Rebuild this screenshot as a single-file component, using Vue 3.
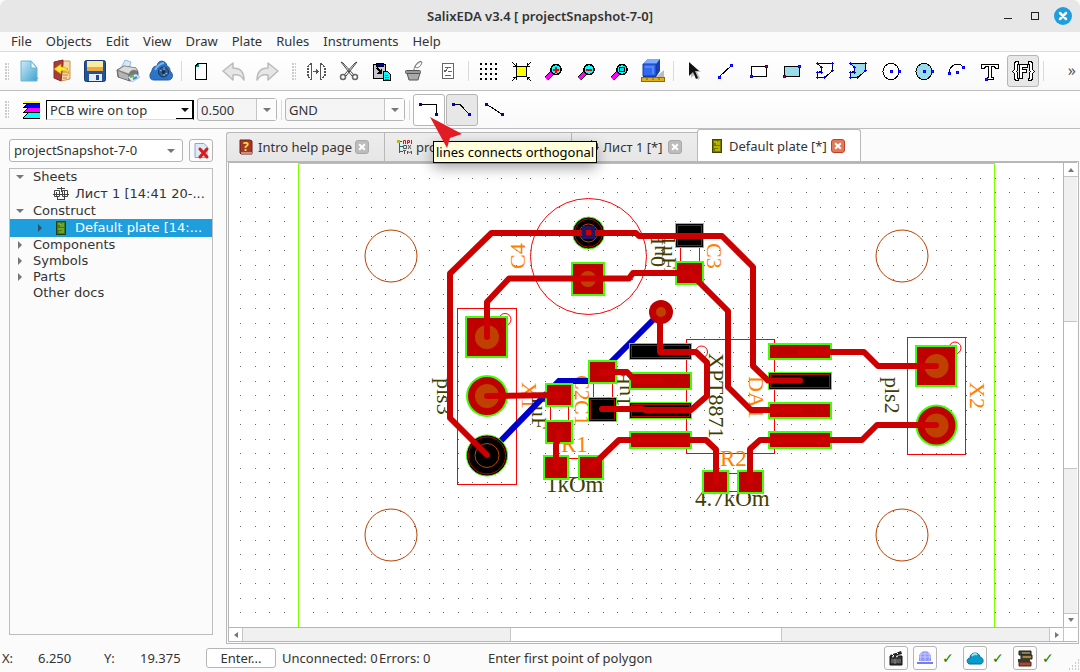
<script setup>
const menus = ['File', 'Objects', 'Edit', 'View', 'Draw', 'Plate', 'Rules', 'Instruments', 'Help']

const lens = '<path d="M4 20L10 14" stroke="#000" stroke-width="5"/><path d="M4 20L10 14" stroke="#f0f" stroke-width="3"/><circle cx="14" cy="10.500" r="5" fill="#0ff" stroke="#000" stroke-width="1.500"/>'
const dot = (x, y) => `<rect x="${x - 1.5}" y="${y - 1.5}" width="3" height="3" fill="#00f"/><rect x="${x - 0.5}" y="${y - 0.5}" width="1" height="1" fill="#c00060"/>`
const node = (x, y) => `<rect x="${x - 1.5}" y="${y - 1.5}" width="3" height="3" fill="#00c"/>`
const poly = (fill) => `<path d="M4.500 4.500H19.500V11.500L12 18.500H4.500V13.500L8.500 12.500V8.500Z" fill="${fill}" stroke="#000" stroke-width="1"/>` + [[4.5, 4.5], [19.5, 4.5], [19.5, 11.5], [11.5, 18.5], [4.5, 18.5], [4.5, 13.5], [8.5, 13.5], [8.5, 8.5]].map(([x, y]) => `<path d="M${x - 1.5} ${y}h3M${x} ${y - 1.5}v3" stroke="#00f"/>`).join('')
const gridDots = [4, 9, 14, 19].map((y) => [4, 9, 14, 19].map((x) => `<rect x="${x}" y="${y}" width="2" height="2"/>`).join('')).join('')

const icons = {
  new: '<defs><linearGradient id="gn" x2="1" y2="1"><stop offset="0" stop-color="#cfeaf6"/><stop offset="1" stop-color="#3ba3d0"/></linearGradient></defs><path d="M5 21l17-1-3-4z" fill="#bbb"/><path d="M4 2h10l6 7v13H4z" fill="url(#gn)" stroke="#6bb4d4"/><path d="M14 2v7h6z" fill="#e8f7fc" stroke="#6bb4d4"/>',
  open: '<path d="M8 2h12v18l-9 2z" fill="#f3d9a5" stroke="#c9935a"/><path d="M13 10h5M13 13h5M13 16h5M13 19h4" stroke="#d4763c"/><path d="M4 3l9-2v4L11 22l-7-3z" fill="#a83c3c" stroke="#8b2b2b"/><path d="M4 10l7-5v3c5 0 7 2 8 7-2-3-4-4-8-3v3z" fill="#ffe92e" stroke="#c8960a" stroke-width=".6"/>',
  save: '<rect x="1.500" y="1.500" width="21" height="21" rx="2" fill="#23539b" stroke="#173a72"/><rect x="4" y="2" width="16" height="10" fill="#ffe9a0"/><path d="M4 9h16M4 11h16" stroke="#eba93a" stroke-width="2"/><rect x="6" y="15" width="13" height="7" fill="#e6eef5"/><rect x="13" y="16" width="3" height="5" fill="#214c8c"/>',
  print: '<path d="M5 9l4-8 6 2-2 7z" fill="#d5e8f8" stroke="#9cbbd6"/><path d="M1 11l7-4 12 2 2 4v6l-8 3-12-4z" fill="#777" stroke="#666"/><path d="M2 11l6-4 12 2c1 1 1 2 1 3-3-2-7-1-8 3z" fill="#dcdcdc" stroke="#888" stroke-width=".6"/><path d="M2 12l10 4v5l-9-3z" fill="#b5b5b5"/><path d="M12 18l8-3 4 3-8 5z" fill="#dff1ff" stroke="#88a9cc" stroke-width=".6"/><path d="M14 18l4-1" stroke="#5fba37" stroke-width="2"/><path d="M17 20l4-2" stroke="#48c" stroke-width="2"/>',
  cloud: '<path d="M5 21c-5 0-5-6-2-9C3 8 6 7 8 7c1-7 9-6 10 0 3 1 3 4 3 5 4 3 3 9-2 9z" fill="#2b74c8" stroke="#245ca4"/><path d="M6 11c2-4 6-7 9-7" stroke="#79b3ee" stroke-width="2" fill="none"/><circle cx="14.500" cy="13" r="5" fill="#335d91" stroke="#18365e"/><path d="M15 8v9M10.500 11l8 4" stroke="#89b5e0"/><circle cx="14.500" cy="13" r="2" fill="#172d4a"/>',
  page: '<path d="M9.500 4.500h8v16h-11v-13z" fill="#fff" stroke="#000" stroke-width="1.500"/><path d="M6 8h4V4z" fill="#087"/>',
  undo: '<path d="M1 12L11 4v5c7 0 11 4 11 12-3-5-6-6-11-5v5z" fill="#e6e6e6" stroke="#bbb" stroke-width="1.500" stroke-linejoin="round"/>',
  redo: '<path d="M23 12L13 4v5C6 9 2 13 2 21c3-5 6-6 11-5v5z" fill="#e6e6e6" stroke="#bbb" stroke-width="1.500" stroke-linejoin="round"/>',
  mirror: '<path d="M7.500 4v17M16.500 4v17M9 12.500h6M12.500 10v5M13.500 11v3" fill="none" stroke="#555"/><path d="M7 4.500L3.500 8v9L7 20.500M17 4.500L20.500 8v9L17 20.500" fill="none" stroke="#555" stroke-width="2" stroke-dasharray="2 1"/>',
  cut: '<path d="M4 3l2 1 11 12-2 1zM20 3l-2 1L7 16l2 1z" fill="#fff" stroke="#444"/><circle cx="6" cy="18" r="2.500" fill="none" stroke="#666" stroke-width="1.500"/><circle cx="18" cy="18" r="2.500" fill="none" stroke="#666" stroke-width="1.500"/>',
  paste: '<rect x="3.500" y="5.500" width="12" height="14" fill="#c8c8cc" stroke="#000" stroke-width="1.500"/><rect x="6" y="4" width="7" height="3" fill="#00a" stroke="#000"/><path d="M7 9l4 4" stroke="#000" stroke-width="2"/><path d="M12 9v6H6z"/><path d="M13.500 12.500h4l3 3v6h-7z" fill="#0ff" stroke="#000"/><path d="M15 16h3M15 18h4M15 20h4" stroke="#06c"/>',
  bucket: '<path d="M4 14h13l-2 7H6z" fill="#aaa" stroke="#555"/><rect x="2.500" y="11.500" width="15" height="3" rx="1" fill="#999" stroke="#555"/><path d="M11 11c0-4 3-6 7-9M12 8c2 2 6 0 7-5-3-1-6 1-7 5" fill="none" stroke="#777"/>',
  list: '<rect x="6.500" y="4.500" width="11" height="15" fill="#fff" stroke="#666" stroke-width="1.500"/><path d="M9 8.500h6M12 12.500h4M9 16.500h6M8 11l1 2 3-4" fill="none" stroke="#666"/>',
  grid: gridDots,
  fit: '<rect x="7.500" y="7.500" width="10" height="10" fill="#ff0" stroke="#000"/><path d="M3 3l4 4M22 3l-4 4M3 22l4-4M22 22l-4-4M7 4v3H4M18 4v3h3M7 21v-3H4M18 21v-3h3" fill="none" stroke="#000"/>',
  plus: lens + '<path d="M11 10.500h6M14 7.500v6" stroke="#e00" stroke-width="2"/>',
  minus: lens + '<path d="M11 10.500h6" stroke="#e00" stroke-width="2"/>',
  zoombox: lens + '<rect x="11.500" y="8.500" width="5" height="4" fill="#0dd" stroke="#000"/>',
  cube: '<path d="M15 18l8-7v7z" fill="#bbb"/><path d="M2 5l5-5h12v12l-4 6H2z" fill="#173fae"/><path d="M2 5l5-5h12l-4 5z" fill="#80adff"/><path d="M2 5h13v12H2z" fill="#316af0" stroke="#153ba7"/><path d="M4 8h8v7" fill="none" stroke="#5487f8" stroke-width="2"/><rect x=".500" y="18.500" width="23" height="4" fill="#e1ad18" stroke="#946a00"/><path d="M6 19v2M12 19v2M18 19v2" stroke="#865f00"/>',
  cursor: '<path d="M10 5v14l4-4 3 6 2-2-3-6h4z" fill="#bbb"/><path d="M8 3v14l4-4 3 7 2-1-3-7h4z" fill="#111"/>',
  line: '<path d="M5 18L18 6" stroke="#000"/>' + dot(5.5, 18.5) + dot(17.5, 6.5),
  rect: '<rect x="4.500" y="7.500" width="15" height="10" fill="#fff" stroke="#000"/>' + dot(4.5, 17.5) + dot(19.5, 7.5),
  rectfill: '<rect x="4.500" y="7.500" width="15" height="10" fill="#9bdcea" stroke="#000"/>' + dot(4.5, 17.5) + dot(19.5, 7.5),
  poly: poly('#fff'),
  polyfill: poly('#9bdcea'),
  circle: '<circle cx="12" cy="12.500" r="8" fill="#fff" stroke="#000"/>' + dot(12.5, 12.5) + dot(20.5, 12.5),
  circlefill: '<circle cx="12" cy="12.500" r="8" fill="#9bdcea" stroke="#000"/>' + dot(12.5, 12.5) + dot(20.5, 12.5),
  arc: '<path d="M4.500 14C4 6 14 2 18.500 8.500" fill="none" stroke="#000"/>' + dot(4.5, 14.5) + dot(18.5, 8.5) + dot(12.5, 13.5),
  text: '<path d="M3.500 5.500h17v4h-3l-1-2h-3v11h2v2h-6l0-2h1v-11h-3l-1 2h-3z" fill="#fff" stroke="#000"/>' + dot(8.5, 20.5),
  func: '<path d="M7.500 2.500h-3l-1 2v6l-2 2 2 2v5l1 2h3v-2h-1v-6l-1-1 1-1v-6h1zM17.500 2.500h3l1 2v6l2 2-2 2v5l-1 2h-3v-2h1v-6l1-1-1-1v-6h-1z" fill="#fff" stroke="#000"/><path d="M8.500 5.500h8v3h-5v2h4v3h-4v6h-3z" fill="#fff" stroke="#000"/>',
  ortho: '<path d="M4 6.500h15.500V17" fill="none" stroke="#000"/>' + node(3.5, 6.5) + node(19.5, 16.5),
  bevel: '<path d="M4 6.500h6L19.500 16.500" fill="none" stroke="#000"/>' + node(3.5, 6.5) + node(19.5, 16.5),
  free: '<path d="M4 6.500L19.500 16.500" fill="none" stroke="#000"/>' + node(3.5, 6.5) + node(19.5, 16.5)
}

const soft = ['new', 'open', 'save', 'print', 'cloud', 'undo', 'redo', 'cursor', 'cube', 'cut', 'bucket']
const groups = [
  [['new', 'open', 'save', 'print', 'cloud'], ['page', 'undo', 'redo']],
  [['mirror', 'cut', 'paste', 'bucket', 'list'], ['grid', 'fit', 'plus', 'minus', 'zoombox', 'cube'],
    ['cursor', 'line', 'rect', 'rectfill', 'poly', 'polyfill', 'circle', 'circlefill', 'arc', 'text', 'func']]
]

const modes = [{ id: 'ortho', state: 'hover' }, { id: 'bevel', state: 'on' }, { id: 'free', state: '' }]

const tree = [
  { t: 'Sheets', a: 'open' },
  { t: 'Лист 1 [14:41 20-...', icon: 'sheet' },
  { t: 'Construct', a: 'open' },
  { t: 'Default plate [14:...', icon: 'plate', a: 'closed', sel: true },
  { t: 'Components', a: 'closed' },
  { t: 'Symbols', a: 'closed' },
  { t: 'Parts', a: 'closed' },
  { t: 'Other docs' }
]

let gridPath = ''
for (let j = 0; j < 31; j++) {
  for (let i = 0; i < 57; i++) {
    gridPath += `M${Math.round(240 + i * 14.51)} ${Math.round(178 + j * 14.48)}h1v1h-1z`
  }
}

const holes = [[391, 256], [902, 256], [391, 535], [902, 535]]
const outlines = [
  [457.5, 308.5, 59, 176], [686.5, 339.5, 88, 114], [907.5, 337.5, 58, 117],
  [680.5, 240.5, 19, 28], [550.5, 395.5, 18, 36], [593.5, 372.5, 19, 36],
  [556.5, 458.5, 35, 19], [715.5, 473.5, 35, 18]
]
const marks = [[505, 319.5], [701.5, 352], [955, 348]]
const pads = [
  [571, 262, 34, 34], [675, 261, 29, 24], [465, 316, 43, 42], [545, 383, 28, 24], [545, 420, 28, 24],
  [588, 360, 29, 24], [543, 455, 26, 25], [578, 455, 26, 25], [629, 372, 63, 18], [629, 431, 63, 18],
  [768, 343, 64, 17], [768, 402, 64, 17], [768, 431, 64, 18], [702, 470, 27, 24], [737, 470, 27, 24],
  [915, 345, 42, 42]
]
const darkPads = [[675, 223, 29, 25], [588, 397, 29, 25], [629, 343, 63, 17], [629, 402, 63, 17], [768, 372, 64, 18]]
const drills = [[588, 279, 8], [487, 337, 12], [487, 396, 12], [936.5, 366, 12], [936.5, 425.5, 12]]
const traces = [
  'M487 455L450 418V273.500L491.500 233H636L639 236H722L753 267V366L768 380.500H800',
  'M487 337V302L509 278.500H629L633 273H690L728 311V387L751 410H800',
  'M487 396L560 395', 'M559 432V438L556 444V467',
  'M591 467L619 440H706L716 449.500V482',
  'M602 372H627L635 380.500H660',
  'M602 409H642L645 410H691L707 396V362.500L696 352H660V312',
  'M800 352H864L878 366H936', 'M750 482V449L760 440H862L877 425H936'
]
const labels = [
  ['C4', 525, 269, -90, 'r'], ['C3', 707, 243, 90, 'r'], ['X1', 522, 382, 90, 'r'], ['X2', 970, 382, 90, 'r'],
  ['DA1', 749, 376, 90, 'r'], ['C2', 575, 375, 90, 'r'], ['C1', 575, 400, 90, 'r'],
  ['R1', 561, 452, 0, 'r'], ['R2', 720, 466, 0, 'r'],
  ['1kOm', 546, 492, 0, 'v'], ['4.7kOm', 695, 506, 0, 'v'],
  ['pls3', 437, 378, 90, 'v'], ['pls2', 885, 377, 90, 'v'], ['XPT8871', 709, 353, 90, 'v'],
  ['1uF', 532, 395, 90, 'v'], ['1uF', 630, 407, -90, 'v'], ['10uF', 665, 278, -90, 'v'], ['1uF', 662, 235, 90, 'v']
]
</script>

<template>
  <div class="app">
    <header class="title">
      <h1>SalixEDA v3.4 [ projectSnapshot-7-0]</h1>
      <div class="winbtns">
        <button aria-label="Minimize"><svg width="16" height="16"><path d="M4 10.500h8" stroke="#222" /></svg></button>
        <button aria-label="Maximize"><svg width="16" height="16"><rect x="4.500" y="4.500" width="7" height="7" fill="none" stroke="#222" /></svg></button>
        <button aria-label="Close"><svg width="18" height="18"><circle cx="9" cy="9" r="9" fill="#1f9ede" /><path d="M6 6l6 6M12 6l-6 6" stroke="#fff" stroke-width="2.500" stroke-linecap="round" /></svg></button>
      </div>
    </header>

    <nav class="menu">
      <button v-for="m in menus" :key="m">{{ m }}</button>
    </nav>

    <div class="bar">
      <template v-for="(bar, b) in groups" :key="b">
        <span class="grip" :class="{ second: b }"></span>
        <template v-for="(g, k) in bar" :key="k">
          <span v-if="k" class="sep"></span>
          <button v-for="id in g" :key="id" class="tool" :class="{ on: id === 'func' }" :aria-label="id">
            <svg width="24" height="24" viewBox="0 0 24 24" :class="{ crisp: !soft.includes(id) }" v-html="icons[id]"></svg>
          </button>
        </template>
      </template>
      <span class="sep"></span>
      <button class="more" aria-label="More tools">»</button>
    </div>

    <div class="bar second-bar">
      <span class="grip"></span>
      <svg class="layers" width="20" height="20" viewBox="0 0 20 20">
        <path d="M4 1h15v2H2z" fill="#ff0" /><path d="M6 3h13v5H2z" fill="#00f" /><path d="M6 8h13v5H2z" fill="#f0f" /><path d="M6 13h13v5H2z" fill="#0ff" />
        <path d="M2 3.500h17M2 7.500h17M2 12.500h17M2 18.500h17M7 4L2 8M7 8L2 13M7 13L2 18" fill="none" stroke="#000" />
      </svg>
      <div class="pick layer"><select aria-label="Layer"><option>PCB wire on top</option></select><i></i></div>
      <div class="combo width"><input aria-label="Width" value="0.500"><button aria-label="Width list"><i></i></button></div>
      <span class="sep"></span>
      <div class="combo net"><input aria-label="Net" value="GND"><button aria-label="Net list"><i></i></button></div>
      <span class="sep"></span>
      <button v-for="m in modes" :key="m.id" class="tool" :class="m.state" :aria-label="m.id">
        <svg class="crisp" width="24" height="24" viewBox="0 0 24 24" v-html="icons[m.id]"></svg>
      </button>
      <div class="tip" role="tooltip">lines connects orthogonal</div>
      <svg class="pointer" width="34" height="32"><path d="M0 0L32 17L20 21L17 31Z" fill="#e21b24" /></svg>
    </div>

    <main class="body">
      <aside class="side">
        <div class="siderow">
          <div class="pick proj"><select aria-label="Project"><option>projectSnapshot-7-0</option></select><i></i></div>
          <button class="del" aria-label="Close project">
            <svg width="18" height="18"><path d="M3 1.500h9l3 3v11H3z" fill="#dfe9f8" stroke="#8aa6cc" /><path d="M8 7l7 8M15 7l-7 8" stroke="#d91c1c" stroke-width="3" stroke-linecap="round" /></svg>
          </button>
        </div>
        <ul class="tree">
          <li v-for="n in tree" :key="n.t" :class="{ child: n.icon, sel: n.sel }">
            <span class="tw"><svg v-if="n.a" width="9" height="9"><path :d="n.a === 'open' ? 'M0 2h8L4 6z' : 'M2 0v8l4-4z'" /></svg></span>
            <svg v-if="n.icon === 'sheet'" class="ni" width="16" height="16"><path d="M1.500 4.500h5v6h-5zM9.500 4.500h5v6h-5zM4 2.500h8M5 13.500h6M0 8.500h16M8.500 1v5M4.500 11v3M11.500 11v3M3.500 6v4M11.500 5v5" fill="none" stroke="#444" /></svg>
            <svg v-if="n.icon === 'plate'" class="ni" width="16" height="16"><rect x="3.500" y="1.500" width="9" height="13" fill="#3f7d1c" stroke="#223f10" /><path d="M5 4h3v3M10 3v4M5 9h6M6 12h3M10 10v3" fill="none" stroke="#a4c844" /></svg>
            <span>{{ n.t }}</span>
          </li>
        </ul>
      </aside>

      <section class="work">
        <div class="tabs">
          <div class="tab t1">
            <svg width="16" height="16"><path d="M2 1h10l2 1v13H3L2 14z" fill="#a3372a" stroke="#6d2018" /><path d="M3 14h11" stroke="#eed" /><text x="5" y="12" fill="#ffe23a" font-size="12" font-weight="bold">?</text></svg>
            <span>Intro help page</span><button class="x" aria-label="Close Intro help page"></button>
          </div>
          <div class="tab t2">
            <svg width="16" height="16"><path d="M2 2.500h4M3.500 2v12M4 7.500h3M4 12.500h3" stroke="#077" stroke-width="1" fill="none" /><path d="M1 1h3v3H1z" fill="#bb0" /><path d="M7.500 5V1.500h2V5M11.500 5V1.500h2v2h-2M15.500 1v4" stroke="#b22" fill="none" /><path d="M7.500 6.500h3v3h-3zM12 6l3 4M15 6l-3 4M7 11.500h3M8.500 12v3M11.500 15v-3l2 2 2-2v3" stroke="#555" fill="none" /></svg>
            <span>pro</span>
          </div>
          <div class="tab t3">
            <svg width="16" height="16"><path d="M1.500 4.500h5v6h-5zM9.500 4.500h5v6h-5zM4 2.500h8M5 13.500h6M0 8.500h16M8.500 1v5" fill="none" stroke="#444" /></svg>
            <span>Лист 1 [*]</span><button class="x" aria-label="Close sheet"></button>
          </div>
          <div class="tab active">
            <svg width="16" height="16"><rect x="3.500" y="1.500" width="9" height="13" fill="#777800" stroke="#444500" /><path d="M5 4h3v3M10 3v4M5 9h6M6 12h3M10 10v3" fill="none" stroke="#f0ee00" /></svg>
            <span>Default plate [*]</span><button class="x red" aria-label="Close plate"></button>
          </div>
        </div>

        <div class="frame">
          <div class="view">
            <div class="canvas">
              <svg class="board" width="834" height="464" viewBox="229 163 834 464">
                <path :d="gridPath" fill="#666" class="crisp" />
                <path d="M298.500 700V163.500H994.500V700" fill="none" stroke="#80ff00" />
                <g fill="none" stroke="#bf4000"><circle v-for="(h, i) in holes" :key="i" :cx="h[0]" :cy="h[1]" r="26" /></g>
                <g fill="none" stroke="#f00">
                  <circle cx="588.500" cy="256.500" r="58" />
                  <rect v-for="(o, i) in outlines" :key="i" :x="o[0]" :y="o[1]" :width="o[2]" :height="o[3]" />
                  <circle v-for="(m, i) in marks" :key="'m' + i" :cx="m[0]" :cy="m[1]" r="6" />
                </g>
                <text v-for="(l, i) in labels" :key="i" class="lab" :class="[l[4], { up: l[3] }]" :transform="`translate(${l[1]} ${l[2]}) rotate(${l[3]})`">{{ l[0] }}</text>
                <path d="M661 312L592 381H559L487 455" fill="none" stroke="#00c" stroke-width="6" />
                <rect v-for="(p, i) in pads" :key="'p' + i" :x="p[0] + 1" :y="p[1] + 1" :width="p[2] - 2" :height="p[3] - 2" fill="#bf0000" stroke="#40ff00" stroke-width="2" />
                <g v-for="(p, i) in darkPads" :key="'d' + i">
                  <rect :x="p[0] + 0.5" :y="p[1] + 0.5" :width="p[2] - 1" :height="p[3] - 1" fill="#000" stroke="#40ff00" />
                  <rect :x="p[0] + 2.5" :y="p[1] + 2.5" :width="p[2] - 5" :height="p[3] - 5" fill="none" stroke="#c00000" />
                </g>
                <g fill="#bf0000">
                  <circle cx="487" cy="396" r="20" stroke="#40ff00" stroke-width="2" />
                  <circle cx="936.500" cy="425.500" r="20" stroke="#40ff00" stroke-width="2" />
                  <circle cx="661" cy="312" r="12" />
                </g>
                <circle v-for="(d, i) in drills" :key="'h' + i" :cx="d[0]" :cy="d[1]" :r="d[2]" fill="#bf4000" />
                <circle cx="487" cy="455.500" r="20.500" stroke="#40ff00" />
                <circle cx="588.500" cy="233" r="16" stroke="#40ff00" />
                <g fill="none">
                  <circle cx="487" cy="455.500" r="18.500" stroke="#c00000" />
                  <circle cx="487" cy="455.500" r="12" stroke="#bf4000" />
                  <circle cx="588.500" cy="233" r="14" stroke="#c00000" />
                  <circle cx="588.500" cy="233" r="9" stroke="#bf4000" />
                  <path v-for="(t, i) in traces" :key="'t' + i" :d="t" stroke="#c00" stroke-width="6" stroke-linecap="round" stroke-linejoin="round" />
                </g>
                <rect x="584" y="228" width="9" height="9" fill="#c00" stroke="#1f1766" stroke-width="4" />
                <circle cx="661" cy="312" r="5" fill="#bf4000" />
              </svg>
            </div>
            <div class="vs"><span class="btn"><i class="u"></i></span><span class="track"></span><span class="thumb"></span><span class="track"></span><span class="btn"><i class="d"></i></span></div>
            <div class="hs"><span class="btn"><i class="l"></i></span><span class="track"></span><span class="thumb"></span><span class="track"></span><span class="btn"><i class="r"></i></span></div>
            <div class="corner"></div>
          </div>
        </div>
      </section>
    </main>

    <footer class="status">
      <span class="k">X:</span><span class="v">6.250</span><span class="k">Y:</span><span class="v">19.375</span>
      <button class="enter">Enter...</button>
      <span class="counts">Unconnected: 0</span><span class="errors">Errors: 0</span>
      <span class="hint">Enter first point of polygon</span>
      <div class="right">
        <button aria-label="Record"><svg width="18" height="18"><path d="M3 7h12v9H3z" fill="#333" stroke="#111" /><path d="M3 6l11-4 1 3L4 8z" fill="#222" /><path d="M5 5l2 2M9 3l2 2M5 8l2-1M9 8l2-1" stroke="#fff" /><path d="M4 11h10M4 13h10M8 10v5" stroke="#888" /></svg></button>
        <button aria-label="Network"><svg width="18" height="18"><path d="M3 12V8a6 6 0 0 1 12 0v4z" fill="#8d94ff" /><path d="M3 8h12M9 2v12M4 5h10M6 3c-2 4-2 7 0 10M12 3c2 4 2 7 0 10" stroke="#c7caff" fill="none" /><path d="M1 13h16v2H1z" fill="#747cf0" /></svg></button>
        <b>✓</b>
        <button aria-label="Cloud"><svg width="18" height="18"><path d="M3 15c-3-2-2-6 1-6 0-6 9-7 10-1 4 1 4 6 1 7z" fill="#0a9cc8" stroke="#066d94" /><path d="M6 7c1-2 4-3 5-1" stroke="#8ee8ff" stroke-width="2" fill="none" /></svg></button>
        <b>✓</b>
        <button aria-label="Library"><svg width="18" height="18"><path d="M3 2h12v4H3z" fill="#44403a" stroke="#222" /><path d="M5 6h11v4H5z" fill="#6a5b2e" stroke="#222" /><path d="M2 10h12v3H2z" fill="#3a3a3a" /><path d="M3 13h12v4H3z" fill="#9b4d35" stroke="#5a2216" /><path d="M6 4h8M7 8h8" stroke="#d6bb5a" /></svg></button>
        <b>✓</b>
        <svg class="gripper" width="12" height="12"><path d="M10 2h1M7 5h1M10 5h1M4 8h1M7 8h1M10 8h1M1 11h1M4 11h1M7 11h1M10 11h1" stroke="#999" /></svg>
      </div>
    </footer>
  </div>
</template>

<style>
body { background: #fbfbfb; }
</style>

<style scoped>
* { box-sizing: border-box; }
.app { display: flex; flex-direction: column; height: 100vh; background: #fbfbfb; color: #333; font: 13px/16px "Noto Sans", "Liberation Sans", sans-serif; overflow: hidden; }
button, input, select { font: inherit; color: inherit; margin: 0; padding: 0; border: 0; background: none; appearance: none; outline: 0; }
.crisp { shape-rendering: crispEdges; }
.title { position: relative; display: flex; align-items: center; justify-content: center; height: 32px; background: #e7e7e7; border-radius: 7px 7px 0 0; }
h1 { margin: 0; font-size: 13px; line-height: 16px; font-weight: 600; color: #333; }
.winbtns { position: absolute; right: 8px; top: 7px; display: flex; align-items: center; gap: 11px; }
.winbtns button { display: flex; }
.menu { display: flex; flex: none; height: 20px; border-bottom: 1px solid #dcdcdc; padding: 0 0 2px 11px; gap: 14px; align-items: center; }
.bar { position: relative; display: flex; flex: none; align-items: center; height: 39px; border-bottom: 1px solid #bdbdbd; background: linear-gradient(#fff, #f9f9f9); padding-left: 5px; }
.second-bar { height: 38px; }
.grip { width: 4px; height: 17px; margin-right: 4px; background: radial-gradient(circle at 1px 1px, #ccc 1px, transparent 1px) 0 0 / 3px 3px; }
.grip.second { margin-left: 8px; }
.tool { display: flex; flex: none; align-items: center; justify-content: center; width: 32px; height: 32px; margin-right: 1px; border: 1px solid transparent; border-radius: 3px; }
.tool.on { background: #e7e7e7; border-color: #b5b5b5; }
.tool.hover { background: #fff; border-color: #b5b5b5; }
.sep { flex: none; width: 1px; height: 20px; margin: 0 3px; background: #dadada; }
.more { margin-left: auto; margin-right: 4px; padding-bottom: 2px; font-size: 16px; color: #555; }
.layers { margin: 0 5px 0 8px; shape-rendering: crispEdges; }
.pick, .combo { position: relative; display: flex; align-items: center; flex: none; }
.pick select { width: 100%; height: 100%; padding-left: 4px; }
.pick i, .combo i { width: 0; border: 4px solid transparent; border-top-color: #777; border-bottom: 0; pointer-events: none; }
.pick i { position: absolute; right: 7px; }
.layer { width: 148px; height: 20px; border: 1px solid #000; border-bottom-color: #ddd; background: #fff; margin-right: 3px; }
.layer select { padding-left: 3px; }
.layer i { right: 4px; border-top-color: #111; }
.layer::after { content: ""; position: absolute; right: 0; bottom: 0; width: 16px; height: 18px; border-right: 1px solid #000; border-bottom: 1px solid #000; }
.combo { height: 23px; border: 1px solid #b5b5b5; border-radius: 3px; background: #f5f5f5; margin-right: 1px; }
.combo input { flex: 1; min-width: 0; padding-left: 3px; }
.combo button { display: flex; align-items: center; justify-content: center; width: 20px; height: 100%; border-left: 1px solid #c5c5c5; background: #fcfcfc; }
.width { width: 80px; }
.net { width: 120px; }
.tip { position: absolute; z-index: 5; left: 433px; top: 50px; height: 22px; padding: 2px; border: 1px solid #000; background: #ffffdc; color: #000; white-space: nowrap; box-shadow: 0 5px 14px rgba(0, 0, 0, .35); }
.pointer { position: absolute; z-index: 6; left: 430px; top: 26px; }
.body { display: flex; flex: 1; min-height: 0; }
.side { display: flex; flex-direction: column; flex: none; width: 226px; padding: 10px 13px 10px 9px; }
.siderow { display: flex; justify-content: space-between; margin-bottom: 6px; }
.proj { width: 174px; height: 23px; border: 1px solid #b5b5b5; border-radius: 3px; background: #fff; }
.proj select { padding-bottom: 1px; }
.del { display: flex; align-items: center; justify-content: center; width: 24px; height: 23px; border: 1px solid #b5b5b5; border-radius: 3px; }
.tree { flex: 1; margin: 0; padding: 0; list-style: none; border: 1px solid #bdbdbd; font: 13px/16px "DejaVu Sans", sans-serif; }
.tree li { display: flex; align-items: center; height: 16px; white-space: nowrap; }
.tree li.child { height: 18px; padding-left: 20px; }
.tw { display: flex; width: 23px; padding-left: 6px; flex: none; fill: #777; }
.ni { margin-right: 6px; }
.sel { background: #1f9ede; color: #fff; }
.sel .tw { fill: #2d5068; }
.work { display: flex; flex: 1; min-width: 0; flex-direction: column; }
.tabs { display: flex; align-items: flex-end; height: 32px; flex: none; }
.tab { display: flex; align-items: center; height: 29px; border: 1px solid #b8b8b8; border-right: 0; border-bottom: 0; background: linear-gradient(#ededed, #e6e6e6); padding-left: 11px; white-space: nowrap; }
.tab svg { margin-right: 4px; flex: none; }
.t1 { width: 158px; border-radius: 3px 0 0 0; }
.t2 { width: 187px; }
.t3 { width: 126px; }
.active { width: 164px; height: 32px; background: #fff; border-right: 1px solid #b8b8b8; border-radius: 3px 3px 0 0; }
.tab span { flex: 1; }
.x { position: relative; width: 14px; height: 14px; margin-right: 15px; border: 1px solid #a9a9a9; border-radius: 3px; background: #bcbcbc; }
.x::before, .x::after { content: ""; position: absolute; left: 2px; top: 5px; width: 8px; height: 2px; background: #fff; transform: rotate(45deg); }
.x::after { transform: rotate(-45deg); }
.x.red { background: #e07a5c; border-color: #cf3a20; }
.frame { display: flex; flex: 1; min-height: 0; border: 1px solid #b8b8b8; padding: 0 1px 1px; margin: 0 1px 1px 0; }
.view { display: grid; flex: 1; grid-template-columns: minmax(0, 1fr) 14px; grid-template-rows: minmax(0, 1fr) 14px; border: 1px solid #b5b5b5; border-right: 0; background: #fff; }
.canvas { overflow: hidden; }
.board { display: block; }
.vs, .hs { display: flex; background: #fff; }
.vs { flex-direction: column; border-left: 1px solid #b5b5b5; }
.hs { border-top: 1px solid #b5b5b5; }
.track { flex: 145; background: #f0f0f0; }
.thumb { flex: 146; background: #fff; }
.vs .thumb { border: 1px solid #c5c5c5; border-width: 1px 0; }
.hs .thumb { border: 1px solid #c5c5c5; border-width: 0 1px; }
.btn { display: flex; flex: none; width: 14px; height: 14px; align-items: center; justify-content: center; border: 0 solid #c5c5c5; }
.vs .btn:first-child { border-bottom-width: 1px; }
.vs .btn:last-child { border-top-width: 1px; }
.hs .btn:first-child { border-right-width: 1px; }
.hs .btn:last-child { border-left-width: 1px; }
.hs .btn { height: 13px; }
.btn i { border: 3px solid transparent; }
.btn .u { border-bottom: 4px solid #777; border-top: 0; }
.btn .d { border-top: 4px solid #777; border-bottom: 0; }
.btn .l { border-right: 4px solid #777; border-left: 0; }
.btn .r { border-left: 4px solid #777; border-right: 0; }
.corner { border-top: 1px solid #c5c5c5; border-left: 1px solid #c5c5c5; }
.lab { font: 23px "Liberation Serif", serif; }
.up { font-size: 22px; }
.lab.r { fill: #ff8000; }
.lab.v { fill: #404000; }
.status { display: flex; align-items: center; flex: none; height: 27px; padding: 0 0 2px 2px; }
.k { width: 36px; }
.v { width: 66px; }
.enter { width: 70px; height: 20px; border: 1px solid #b5b5b5; border-radius: 3px; background: #fff; margin-right: 6px; }
.counts { width: 97px; }
.errors { width: 109px; }
.right { display: flex; align-items: center; margin-left: auto; }
.right button { display: flex; align-items: center; justify-content: center; width: 24px; height: 24px; border: 1px solid #b5b5b5; border-radius: 3px; margin-right: 5px; background: #fdfdfd; }
.right b { width: 21px; color: #080; font: 14px/16px "DejaVu Sans", sans-serif; }
.right b:last-of-type { width: 26px; }
.gripper { align-self: flex-end; }
</style>
